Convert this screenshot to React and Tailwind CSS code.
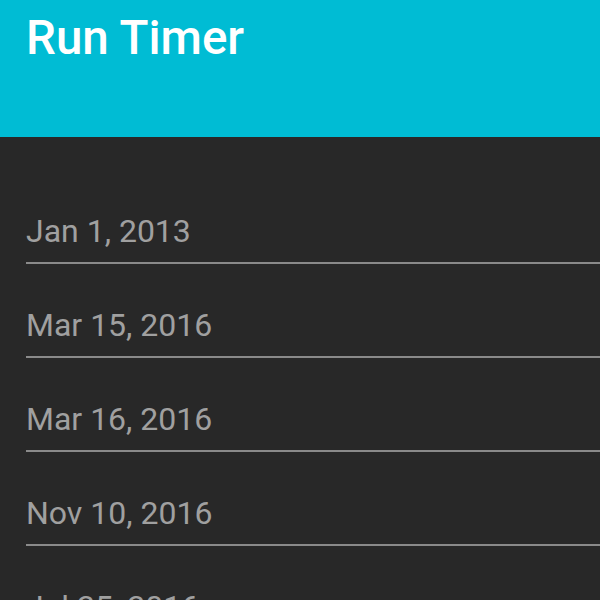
const dates = ['Jan 1, 2013', 'Mar 15, 2016', 'Mar 16, 2016', 'Nov 10, 2016', 'Jul 25, 2016']

export default function App() {
  return (
    <div className="h-[600px] w-[600px] overflow-hidden bg-[#282828] font-['Roboto',sans-serif]">
      <header className="h-[137px] bg-[#00bcd4] px-[26px] pt-[10px]">
        <h1 className="text-[47.5px] font-medium leading-[56px] text-white">Run Timer</h1>
      </header>
      <ul className="pl-[26px] pt-[33px]">
        {dates.map((d) => (
          <li key={d} className="border-b-2 border-[#8a8a8a] pb-[11px] pt-[41px]">
            <span className="block text-[32px] leading-[40px] text-[#a0a0a0]">{d}</span>
          </li>
        ))}
      </ul>
    </div>
  )
}
